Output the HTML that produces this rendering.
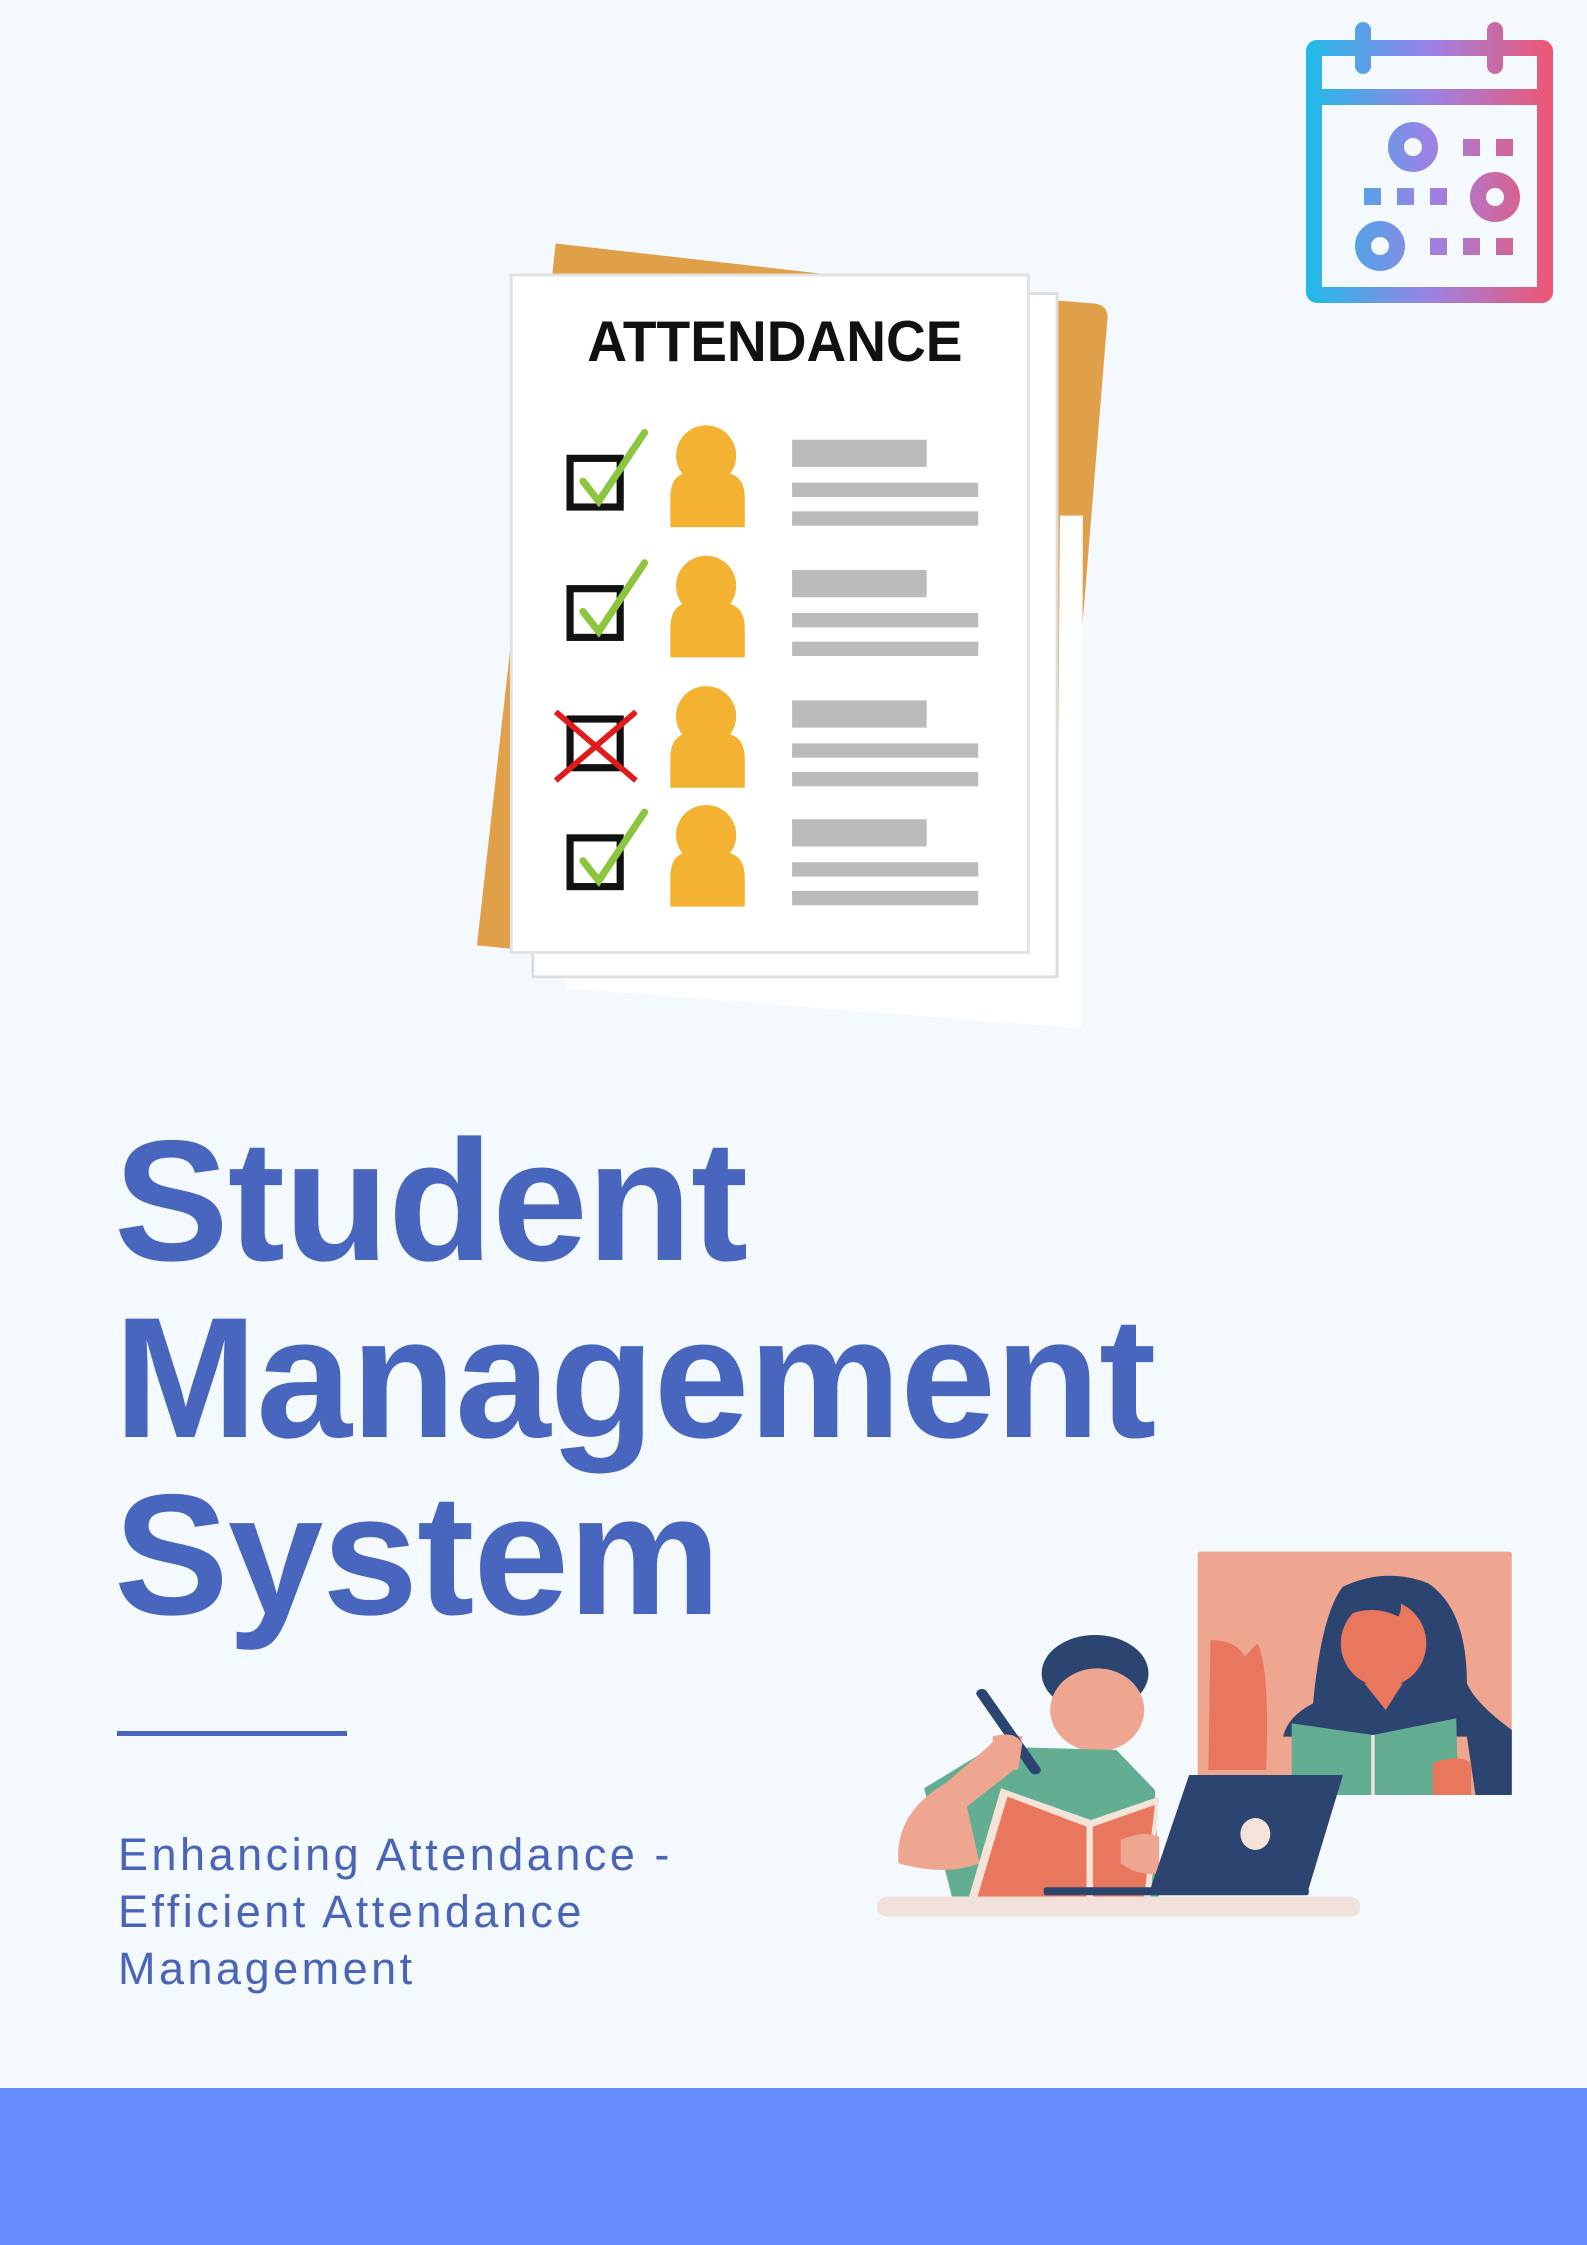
<!DOCTYPE html>
<html><head><meta charset="utf-8"><style>
html,body{margin:0;padding:0}
body{width:1587px;height:2245px;position:relative;background:#f4f9fd;overflow:hidden;font-family:"Liberation Sans",sans-serif}
svg.bg{position:absolute;left:0;top:0}
.title{position:absolute;left:114px;top:1113px;color:#4866bd;font-weight:bold;font-size:172px;line-height:177px;letter-spacing:-1px}
.rule{position:absolute;left:117px;top:1731px;width:230px;height:5px;background:#4866bd}
.sub{position:absolute;left:118px;top:1826px;color:#4a64b8;font-size:45px;line-height:57px;letter-spacing:3.5px}
.bar{position:absolute;left:0;top:2088px;width:1587px;height:157px;background:#668cfc}
</style></head><body>
<svg class="bg" width="1587" height="2245" viewBox="0 0 1587 2245">
<defs>
<linearGradient id="cg" x1="1306" y1="0" x2="1553" y2="0" gradientUnits="userSpaceOnUse">
<stop offset="0" stop-color="#1fbbe8"/><stop offset="0.5" stop-color="#9c82e6"/><stop offset="1" stop-color="#ee5671"/></linearGradient>
</defs>
<g fill="none" stroke="url(#cg)" stroke-width="16" stroke-linejoin="round">
<rect x="1314" y="48" width="231" height="247" rx="3"/>
<line x1="1314" y1="97" x2="1545" y2="97"/>
</g>
<g stroke="url(#cg)" stroke-width="16" stroke-linecap="round">
<line x1="1363" y1="30" x2="1363" y2="66"/><line x1="1495" y1="30" x2="1495" y2="66"/>
</g>
<g fill="none" stroke="url(#cg)" stroke-width="16">
<circle cx="1413" cy="147" r="17"/><circle cx="1495" cy="197" r="17"/><circle cx="1380" cy="246" r="17"/>
</g>
<g fill="url(#cg)">
<rect x="1463" y="139" width="17" height="17"/><rect x="1496" y="139" width="17" height="17"/>
<rect x="1364" y="188" width="17" height="17"/><rect x="1397" y="188" width="17" height="17"/><rect x="1430" y="188" width="17" height="17"/>
<rect x="1430" y="238" width="17" height="17"/><rect x="1463" y="238" width="17" height="17"/><rect x="1496" y="238" width="17" height="17"/>
</g>
<g transform="scale(1.4323)">
<path d="M388,170 L740,210 L765,212 Q775,214 773,225 L735,690 Q733,697 690,695 L333,660 Z" fill="#e0a04a"/>
<polygon points="396,690 755,718 756,360 740,360 738,682 395,680" fill="#fff"/>
<rect x="372" y="205" width="366" height="477" fill="#fff" stroke="#ddd" stroke-width="2"/>
<rect x="357" y="192" width="361" height="473" fill="#fff" stroke="#e2e2e2" stroke-width="2"/>
<text x="410" y="252" textLength="262" lengthAdjust="spacingAndGlyphs" font-family="Liberation Sans" font-weight="bold" font-size="40" fill="#111">ATTENDANCE</text>
<g id="row">
<rect x="398" y="320" width="35" height="34" fill="none" stroke="#111" stroke-width="5"/>
<circle cx="493" cy="318" r="21" fill="#f4b233"/>
<path d="M468,368 L468,348 Q468,330 482,330 Q493,342 504,330 Q520,330 520,348 L520,368 Z" fill="#f4b233"/>
<rect x="553" y="307" width="94" height="19" fill="#bbb"/>
<rect x="553" y="337" width="130" height="10" fill="#bbb"/>
<rect x="553" y="357" width="130" height="10" fill="#bbb"/>
</g>
<use href="#row" y="91"/><use href="#row" y="182"/><use href="#row" y="265"/>
<g fill="none" stroke="#8cc63f" stroke-width="5" stroke-linecap="round">
<path d="M407,336 L418,350 L450,302"/><path d="M407,427 L418,441 L450,393"/><path d="M407,601 L418,615 L450,567"/>
</g>
<g stroke="#e01b1b" stroke-width="4"><line x1="388" y1="497" x2="444" y2="545"/><line x1="444" y1="497" x2="388" y2="545"/></g>
</g>
<g transform="translate(860,1530) scale(0.4274,0.3333)">
<rect x="790" y="65" width="735" height="730" rx="6" fill="#eea690"/>
<path d="M1060,520 Q1080,250 1130,170 Q1230,110 1330,160 Q1420,240 1420,460 Q1440,520 1525,600 L1525,795 L1440,795 L1420,620 L990,620 Q1000,560 1060,520 Z" fill="#2c4570"/>
<ellipse cx="1225" cy="340" rx="100" ry="130" fill="#e8775e"/>
<path d="M1130,250 Q1140,180 1230,180 Q1280,200 1260,260 Q1200,220 1130,260 Z" fill="#2c4570"/>
<path d="M1180,460 L1230,540 L1270,460 Z" fill="#e8775e"/>
<path d="M820,330 Q880,330 900,380 L930,340 Q960,420 950,720 L815,720 Z" fill="#e8775e"/>
<polygon points="1010,580 1200,615 1395,565 1400,795 1010,795" fill="#63ad92"/>
<line x1="1200" y1="615" x2="1200" y2="795" stroke="#f3e3d8" stroke-width="8"/>
<path d="M1340,700 Q1400,670 1430,700 L1430,795 L1340,795 Z" fill="#e8775e"/>
<ellipse cx="550" cy="430" rx="125" ry="115" fill="#2c4570"/>
<ellipse cx="555" cy="540" rx="110" ry="125" fill="#eea690"/>
<path d="M440,440 Q520,380 660,440 L640,380 Q560,320 450,380 Z" fill="#2c4570"/>
<polygon points="150,775 310,650 600,660 690,780 700,1100 215,1100" fill="#63ad92"/>
<path d="M90,1000 Q80,850 200,760 L300,650 Q330,600 380,620 L360,720 L250,830 L280,1000 Q200,1040 90,1000 Z" fill="#eea690"/>
<line x1="285" y1="490" x2="410" y2="720" stroke="#2c4570" stroke-width="26" stroke-linecap="round"/>
<path d="M310,620 Q360,600 380,640 L370,720 L320,720 Z" fill="#eea690"/>
<polygon points="255,1100 330,775 540,870 700,800 680,1100" fill="#f3e3d8"/>
<polygon points="275,1100 345,800 530,890 530,1100" fill="#e8775e"/>
<polygon points="545,890 690,825 665,1100 545,1100" fill="#e8775e"/>
<path d="M610,930 Q660,900 700,920 L700,1030 Q650,1040 610,1000 Z" fill="#eea690"/>
<polygon points="770,735 1130,735 1050,1075 680,1075" fill="#2c4570"/>
<rect x="430" y="1072" width="620" height="24" rx="6" fill="#2c4570"/>
<ellipse cx="925" cy="912" rx="35" ry="48" fill="#f3e3d8"/>
<rect x="40" y="1100" width="1130" height="60" rx="25" fill="#f1e1da"/>
</g>
</svg>
<div class="title">Student<br>Management<br>System</div>
<div class="rule"></div>
<div class="sub">Enhancing Attendance -<br>Efficient Attendance<br>Management</div>
<div class="bar"></div>
</body></html>
